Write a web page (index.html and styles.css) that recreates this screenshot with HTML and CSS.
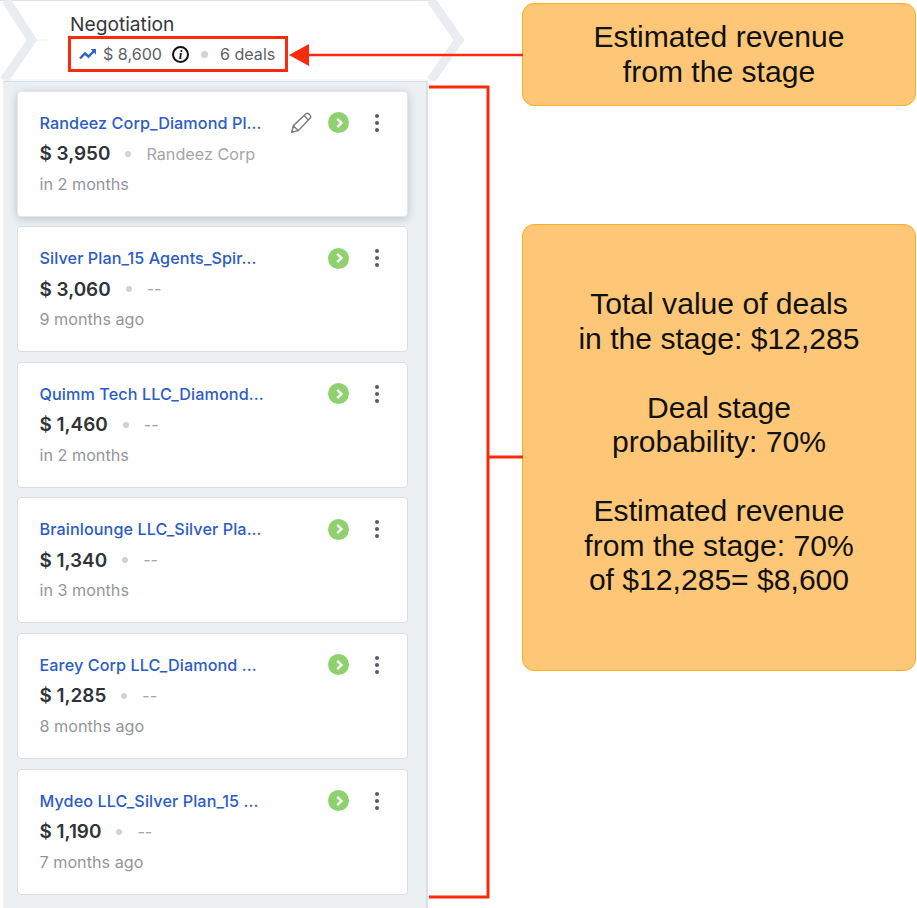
FILE: index.html
```html
<!DOCTYPE html>
<html lang="en">
<head>
    <meta charset="UTF-8">
    <title>Negotiation stage</title>
    <link rel="stylesheet" href="styles.css">
</head>
<body>

    <div class="page">
        <div class="board">
            <!-- Stage header -->
            <div class="stage">
                <svg class="stage-shape" width="470" height="81" viewBox="0 0 470 81">
                    <path d="M0 .5H436" fill="none" stroke="#dde3ea" stroke-width="1"/>
                    <path d="M4 80H432" fill="none" stroke="#eef1f4" stroke-width="1"/>
                    <path d="M431 0L459 40L431 80" fill="none" stroke="#e9edf2" stroke-width="9"/>
                    <path d="M6 0L32 40L4 80" fill="none" stroke="#e9edf2" stroke-width="9"/>
                    <path d="M36 40H50" fill="none" stroke="#eef1f4" stroke-width="1"/>
                </svg>
                <div class="stage-name">Negotiation</div>
                <div class="stage-meta">
                    <svg class="trend" width="18" height="12" viewBox="0 0 18 12">
                        <path d="M1 10.5L6 5.5L9.5 8.5L16 2" fill="none" stroke="#2e62c9" stroke-width="2.4"/>
                        <path d="M11.5 1H17V6.5Z" fill="#2e62c9"/>
                    </svg>
                    <span class="revenue">$ 8,600</span>
                    <span class="info">i</span>
                    <span class="dot stage-dot"></span>
                    <span class="count">6 deals</span>
                </div>
            </div>

            <!-- Deal cards -->
            <div class="column">
                <div class="card card-active">
                    <div class="card-top">
                        <a class="deal-name">Randeez Corp_Diamond Pl...</a>
                        <svg class="pencil" width="24" height="24" viewBox="0 0 22 22">
                            <path d="M2.5 19.5L4 13.5L15.5 2.5Q16.8 1.6 18 2.5L19.5 4Q20.4 5.2 19.5 6.5L8.5 18Z M4 13.5L8.5 18 M13.8 4.2L17.8 8.2" fill="none" stroke="#7a7a7a" stroke-width="1.3"/>
                        </svg>
                        <span class="go"><svg width="12" height="12" viewBox="0 0 10 10"><path d="M3.5 1.5L7 5L3.5 8.5" fill="none" stroke="#fff" stroke-width="2"/></svg></span>
                        <span class="more"><i></i><i></i><i></i></span>
                    </div>
                    <div class="card-mid">
                        <span class="amount">$ 3,950</span>
                        <span class="dot"></span>
                        <span class="company">Randeez Corp</span>
                    </div>
                    <div class="when">in 2 months</div>
                </div>

                <div class="card">
                    <div class="card-top">
                        <a class="deal-name">Silver Plan_15 Agents_Spir...</a>
                        <span class="go"><svg width="12" height="12" viewBox="0 0 10 10"><path d="M3.5 1.5L7 5L3.5 8.5" fill="none" stroke="#fff" stroke-width="2"/></svg></span>
                        <span class="more"><i></i><i></i><i></i></span>
                    </div>
                    <div class="card-mid">
                        <span class="amount">$ 3,060</span>
                        <span class="dot"></span>
                        <span class="company">--</span>
                    </div>
                    <div class="when">9 months ago</div>
                </div>

                <div class="card">
                    <div class="card-top">
                        <a class="deal-name">Quimm Tech LLC_Diamond...</a>
                        <span class="go"><svg width="12" height="12" viewBox="0 0 10 10"><path d="M3.5 1.5L7 5L3.5 8.5" fill="none" stroke="#fff" stroke-width="2"/></svg></span>
                        <span class="more"><i></i><i></i><i></i></span>
                    </div>
                    <div class="card-mid">
                        <span class="amount">$ 1,460</span>
                        <span class="dot"></span>
                        <span class="company">--</span>
                    </div>
                    <div class="when">in 2 months</div>
                </div>

                <div class="card">
                    <div class="card-top">
                        <a class="deal-name">Brainlounge LLC_Silver Pla...</a>
                        <span class="go"><svg width="12" height="12" viewBox="0 0 10 10"><path d="M3.5 1.5L7 5L3.5 8.5" fill="none" stroke="#fff" stroke-width="2"/></svg></span>
                        <span class="more"><i></i><i></i><i></i></span>
                    </div>
                    <div class="card-mid">
                        <span class="amount">$ 1,340</span>
                        <span class="dot"></span>
                        <span class="company">--</span>
                    </div>
                    <div class="when">in 3 months</div>
                </div>

                <div class="card">
                    <div class="card-top">
                        <a class="deal-name">Earey Corp LLC_Diamond ...</a>
                        <span class="go"><svg width="12" height="12" viewBox="0 0 10 10"><path d="M3.5 1.5L7 5L3.5 8.5" fill="none" stroke="#fff" stroke-width="2"/></svg></span>
                        <span class="more"><i></i><i></i><i></i></span>
                    </div>
                    <div class="card-mid">
                        <span class="amount">$ 1,285</span>
                        <span class="dot"></span>
                        <span class="company">--</span>
                    </div>
                    <div class="when">8 months ago</div>
                </div>

                <div class="card">
                    <div class="card-top">
                        <a class="deal-name">Mydeo LLC_Silver Plan_15 ...</a>
                        <span class="go"><svg width="12" height="12" viewBox="0 0 10 10"><path d="M3.5 1.5L7 5L3.5 8.5" fill="none" stroke="#fff" stroke-width="2"/></svg></span>
                        <span class="more"><i></i><i></i><i></i></span>
                    </div>
                    <div class="card-mid">
                        <span class="amount">$ 1,190</span>
                        <span class="dot"></span>
                        <span class="company">--</span>
                    </div>
                    <div class="when">7 months ago</div>
                </div>
            </div>
        </div>

        <!-- Callouts -->
        <div class="notes">
            <div class="note note-small">Estimated revenue<br>from the stage</div>
            <div class="note note-big">
                <p>Total value of deals<br>in the stage: $12,285</p>
                <p>Deal stage<br>probability: 70%</p>
                <p>Estimated revenue<br>from the stage: 70%<br>of $12,285= $8,600</p>
            </div>
        </div>

        <!-- Red annotation marks -->
        <div class="mark-box"></div>
        <svg class="marks" width="917" height="908" viewBox="0 0 917 908">
            <path d="M306 55H523" fill="none" stroke="#fa2a0c" stroke-width="2.5"/>
            <path d="M289 55L309 44V66Z" fill="#fa2a0c"/>
            <path d="M429 87H488V897H429 M488 457H523" fill="none" stroke="#fa2a0c" stroke-width="3"/>
        </svg>
    </div>

</body>
</html>
```

FILE: styles.css
```css
* {
    box-sizing: border-box;
}

body {
    margin: 0;
    background-color: #fff;
    font-family: Inter, "Noto Sans", sans-serif;
}

.page {
    position: relative;
    width: 917px;
    height: 908px;
    overflow: hidden;
    display: flex;
}

.board {
    width: 428px;
    flex-shrink: 0;
}

.stage {
    position: relative;
    height: 81px;
    padding: 13px 0 0 70px;
}

.stage-shape {
    position: absolute;
    left: 0;
    top: 0;
}

.stage-name {
    position: relative;
    font-size: 19.2px;
    line-height: 23px;
    color: #33383d;
}

.stage-meta {
    position: relative;
    display: flex;
    align-items: center;
    margin-top: 8px;
    padding-left: 9px;
    height: 20px;
    font-size: 16.1px;
    color: #5c6168;
}

.revenue {
    margin-left: 6px;
}

.info {
    width: 17px;
    height: 17px;
    margin-left: 10px;
    border: 2px solid #111;
    border-radius: 50%;
    font-family: "Liberation Serif", serif;
    font-style: italic;
    font-weight: 700;
    font-size: 13px;
    line-height: 13px;
    text-align: center;
    color: #111;
}

.dot {
    width: 6px;
    height: 6px;
    border-radius: 50%;
    background-color: #cfd2d6;
    margin: 0 15px;
}

.stage-dot {
    width: 7px;
    height: 7px;
    margin: 0 12px 0 12px;
}

.column {
    margin-left: 3px;
    height: 827px;
    padding: 8.6px 18px 0 14px;
    background-color: #ecf0f3;
    border-top: 1px solid #d9dfe6;
    border-right: 2px solid #dbe0e7;
    display: flex;
    flex-direction: column;
    gap: 9.6px;
}

.card {
    height: 126px;
    flex-shrink: 0;
    padding: 20px 21px 0 21.5px;
    background-color: #fff;
    border: 1px solid #d8dee5;
    border-radius: 4px;
}

.card-active {
    border-color: #e3e7ec;
    box-shadow: 0 2px 8px rgba(60, 75, 95, 0.28);
}

.card-top {
    display: flex;
    align-items: center;
    height: 22px;
}

.deal-name {
    font-size: 16.2px;
    font-weight: 500;
    letter-spacing: 0.08px;
    color: #2c5cc5;
    white-space: nowrap;
    margin-right: auto;
}

.pencil {
    margin-right: 15px;
}

.go {
    width: 21px;
    height: 21px;
    border-radius: 50%;
    background-color: #8fd16f;
    display: flex;
    align-items: center;
    justify-content: center;
}

.more {
    display: flex;
    flex-direction: column;
    gap: 3px;
    margin-left: 26px;
    margin-right: 7px;
}

.more i {
    width: 4px;
    height: 4px;
    border-radius: 50%;
    background-color: #555b62;
}

.card-mid {
    display: flex;
    align-items: center;
    margin-top: 8px;
    height: 24px;
}

.amount {
    font-size: 18.9px;
    font-weight: 600;
    color: #2f3338;
}

.company {
    font-size: 16.2px;
    color: #a3a6aa;
}

.when {
    margin-top: 8px;
    font-size: 16.2px;
    color: #92969b;
}

.notes {
    margin-left: 94px;
    padding-top: 3px;
    width: 394px;
    display: flex;
    flex-direction: column;
    gap: 118px;
}

.note {
    background-color: #fec778;
    border: 1px solid #fdae1c;
    border-radius: 12px;
    font-family: "Liberation Sans", Arial, sans-serif;
    font-size: 30.1px;
    line-height: 34.5px;
    text-align: center;
    color: #111;
}

.note-small {
    height: 103px;
    padding-top: 16px;
}

.note-big {
    height: 447px;
    padding-top: 62px;
}

.note-big p {
    margin: 0 0 34.5px;
}

.mark-box {
    position: absolute;
    left: 68px;
    top: 36px;
    width: 220px;
    height: 36px;
    border: 3px solid #fa2a0c;
}

.marks {
    position: absolute;
    left: 0;
    top: 0;
    pointer-events: none;
}
```
